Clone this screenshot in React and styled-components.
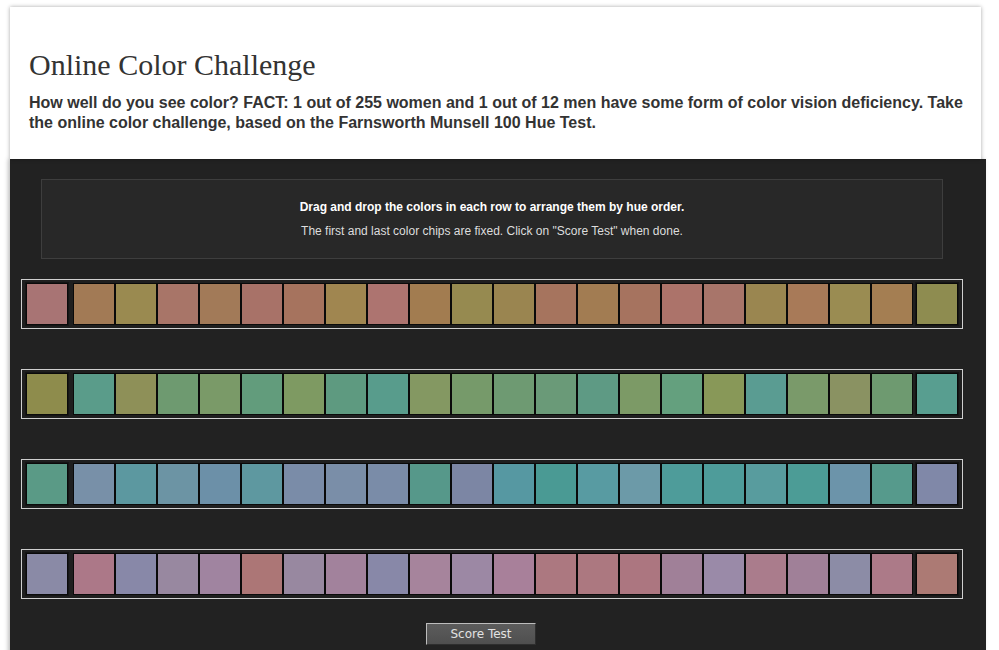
import React from "react";
import styled, { createGlobalStyle } from "styled-components";

const GlobalStyle = createGlobalStyle`
  html, body { margin: 0; padding: 0; background: #ffffff; }
  body { font-family: "Liberation Sans", Arial, sans-serif; overflow: hidden; }
  * { box-sizing: border-box; }
`;

const Page = styled.div`
  padding: 7px 0 0 10px;
  background: #ffffff;
`;

const HeaderCard = styled.header`
  width: 971px;
  background: #ffffff;
  padding: 40px 10px 26px 19px;
  box-shadow: 0 0 4px rgba(0, 0, 0, 0.35);
  position: relative;
  z-index: 1;
`;

const Title = styled.h1`
  margin: 0;
  font-family: "Liberation Serif", Georgia, serif;
  font-weight: normal;
  font-size: 30px;
  line-height: 36px;
  color: #333333;
`;

const Intro = styled.p`
  margin: 10px 0 0;
  font-family: "Liberation Sans", Arial, sans-serif;
  font-weight: bold;
  font-size: 16px;
  line-height: 20px;
  color: #333333;
`;

const Stage = styled.section`
  width: 976px;
  min-height: 500px;
  background: #222222;
  padding: 20px 23px 20px 11px;
  box-shadow: -2px 0 4px rgba(0, 0, 0, 0.25);
`;

const InfoBox = styled.div`
  margin: 0 20px;
  border: 1px solid #3e3e3e;
  background: #282828;
  padding: 19px 0;
  text-align: center;
  font-family: "Liberation Sans", Arial, sans-serif;
  font-size: 12px;
  line-height: 16px;
`;

const InfoLine = styled.p`
  margin: ${(p) => (p.$second ? "8px 0 0" : "0")};
  font-weight: ${(p) => (p.$strong ? "bold" : "normal")};
  color: ${(p) => (p.$strong ? "#ffffff" : "#dddddd")};
`;

const Rows = styled.div`
  margin-top: 20px;
  display: flex;
  flex-direction: column;
  gap: 40px;
`;

const Row = styled.div`
  display: flex;
  align-items: center;
  width: 942px;
  height: 50px;
  border: 1px solid #cfcfcf;
  background: #1f1f1f;
  padding: 3px 4px;
`;

const Track = styled.div`
  display: flex;
  margin: 0 3px 0 5px;
`;

const Chip = styled.div`
  width: 42px;
  height: 42px;
  flex: 0 0 42px;
  border: 1px solid #0a0a0a;
  background: ${(p) => p.$c};
  box-shadow: ${(p) => (p.$fixed ? "0 0 0 1px #151515" : "none")};
`;

const ButtonRow = styled.div`
  display: flex;
  margin-top: 24px;
  padding-left: 405px;
`;

const ScoreButton = styled.button`
  width: 110px;
  height: 22px;
  padding: 0;
  background: linear-gradient(#5c5c5c, #4f4f4f);
  border: 1px solid;
  border-color: #bdbdbd #2e2e2e #2e2e2e #bdbdbd;
  color: #e2e2e2;
  font-family: "DejaVu Sans", "Lucida Grande", sans-serif;
  font-size: 12px;
  line-height: 20px;
  cursor: pointer;
`;

const ROWS = [
  [
    "#a87474",
    "#a27a55", "#9a8a50", "#a87568", "#a27a58", "#a87268", "#a6735e", "#a08650",
    "#ad7470", "#a27c50", "#968a50", "#9a8550", "#a6745e", "#a27c52", "#a6735f",
    "#ac736a", "#a8756a", "#9a8650", "#a87a58", "#9a8c52", "#a47e52",
    "#8e8c50",
  ],
  [
    "#8e8c4c",
    "#5a9c8a", "#8e9058", "#6e9a70", "#7a9a68", "#629c7c", "#7e9a62", "#5e9a80",
    "#589c8c", "#849862", "#769a6a", "#6e9a72", "#6a9a78", "#5e9a84", "#7c9a66",
    "#64a07e", "#889858", "#5a9c92", "#7a9a6a", "#8a9262", "#6e9a70",
    "#589e90",
  ],
  [
    "#5a9a86",
    "#7890a8", "#5c98a0", "#6c94a4", "#6c90a8", "#5e98a0", "#7a8ca8", "#7a8ea8",
    "#7a8ca8", "#56988a", "#7c86a4", "#5698a2", "#4a9a94", "#589ba2", "#6c9aa8",
    "#4e9c9a", "#4e9c9a", "#589c9e", "#4c9c96", "#6c94aa", "#569a8c",
    "#8088a8",
  ],
  [
    "#8a8aa6",
    "#ac7888", "#8888a8", "#9888a0", "#a084a0", "#ac7676", "#9888a0", "#a2829c",
    "#8888a8", "#a6849c", "#9c88a4", "#a8809a", "#ac7880", "#ac7880", "#ac7680",
    "#a08098", "#9a8aa8", "#aa7c8c", "#a08098", "#8c8ca6", "#ac7a88",
    "#ac7a74",
  ],
];

export default function App() {
  return (
    <Page>
      <GlobalStyle />
      <HeaderCard>
        <Title>Online Color Challenge</Title>
        <Intro>
          How well do you see color? FACT: 1 out of 255 women and 1 out of 12 men have some form of
          color vision deficiency. Take the online color challenge, based on the Farnsworth Munsell
          100 Hue Test.
        </Intro>
      </HeaderCard>
      <Stage>
        <InfoBox>
          <InfoLine $strong>Drag and drop the colors in each row to arrange them by hue order.</InfoLine>
          <InfoLine $second>
            The first and last color chips are fixed. Click on "Score Test" when done.
          </InfoLine>
        </InfoBox>
        <Rows>
          {ROWS.map((row, i) => {
            const first = row[0];
            const last = row[row.length - 1];
            const middle = row.slice(1, -1);
            return (
              <Row key={i}>
                <Chip $c={first} $fixed />
                <Track>
                  {middle.map((c, j) => (
                    <Chip key={j} $c={c} />
                  ))}
                </Track>
                <Chip $c={last} $fixed />
              </Row>
            );
          })}
        </Rows>
        <ButtonRow>
          <ScoreButton type="button">Score Test</ScoreButton>
        </ButtonRow>
      </Stage>
    </Page>
  );
}
